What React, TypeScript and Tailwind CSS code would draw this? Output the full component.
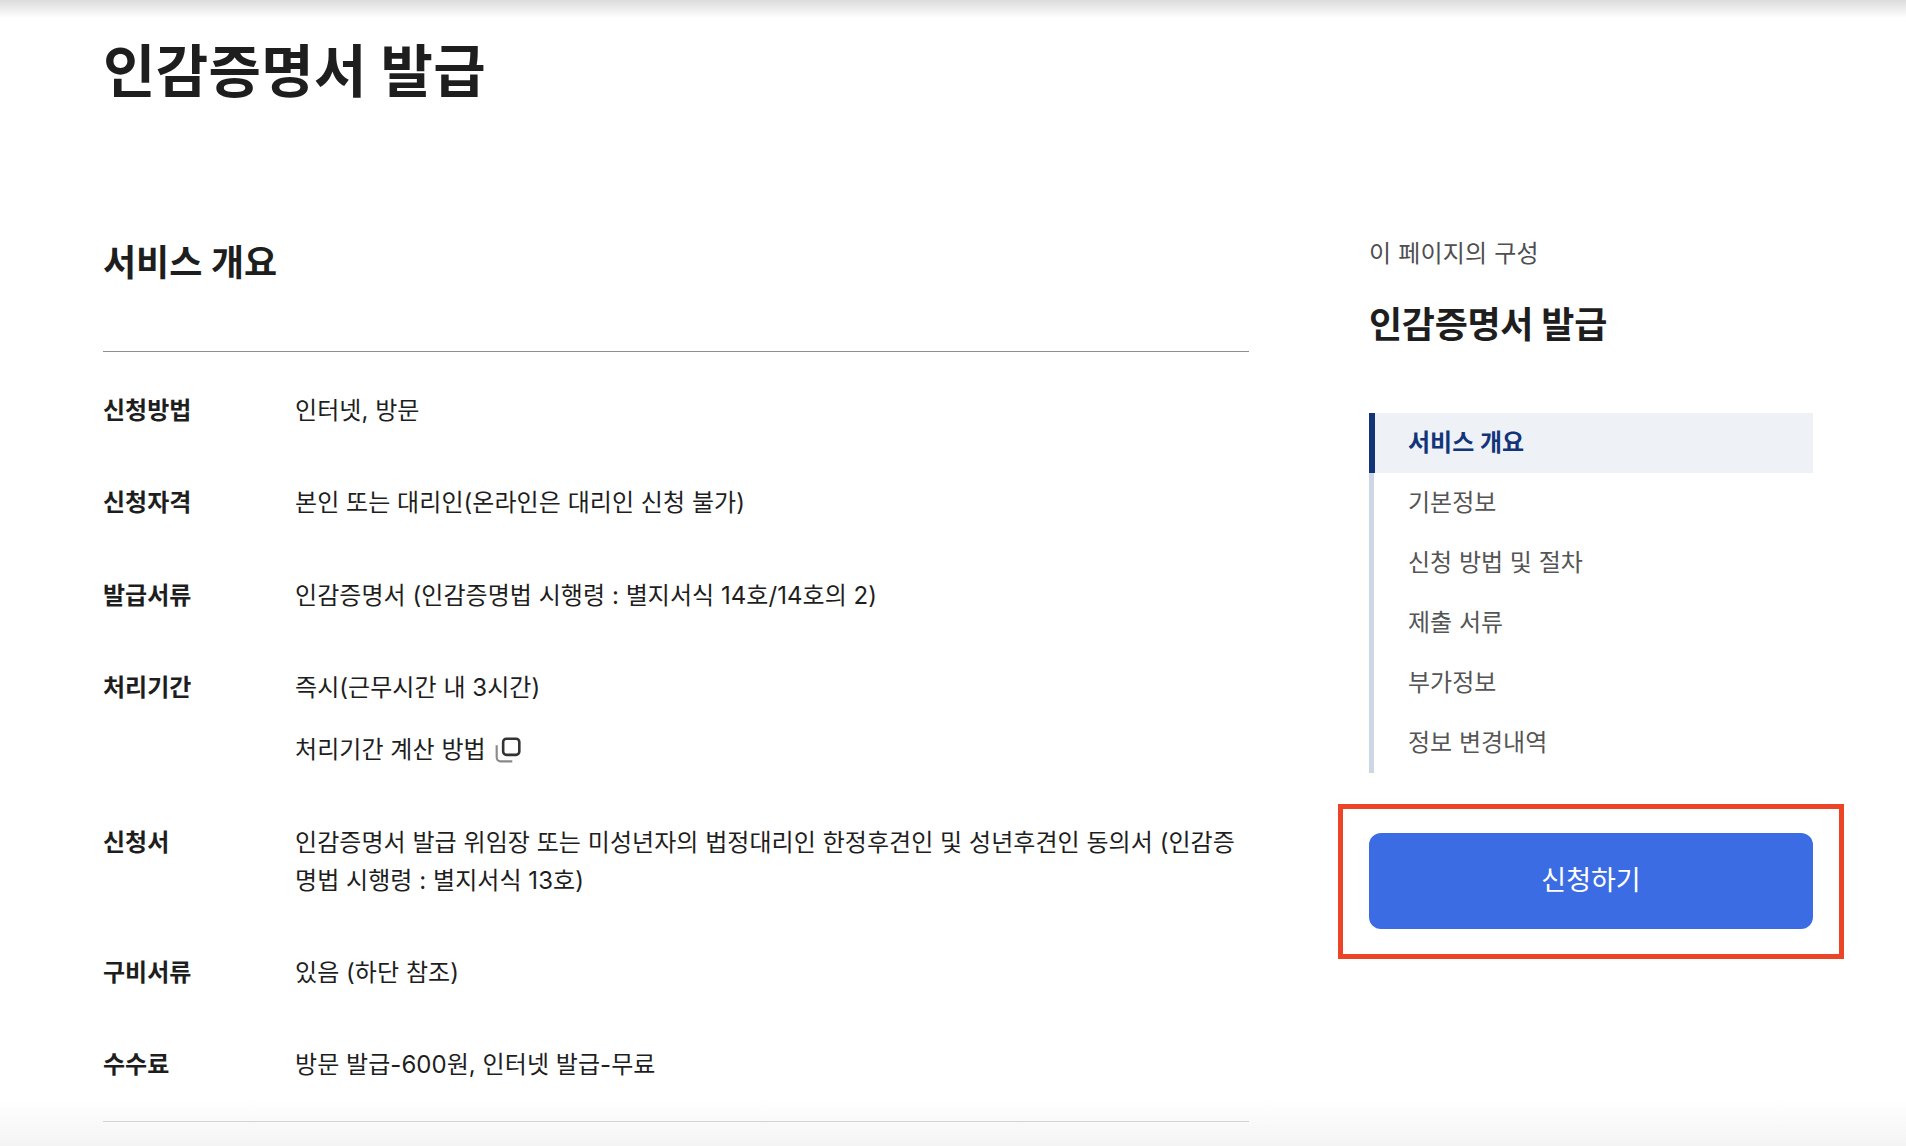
const FONT = "font-['Inter','Noto_Sans_CJK_KR','Noto_Sans',sans-serif]";

function CopyIcon() {
  return (
    <svg width="28" height="28" viewBox="0 0 26 26" fill="none" stroke="#4a4a4a" strokeWidth="2" className="ml-2 shrink-0">
      <rect x="8.5" y="2.5" width="15" height="15" rx="3" strokeWidth="2.4" stroke="#333" />
      <path d="M2.5 8.5V20a3.5 3.5 0 0 0 3.5 3.5h11" stroke="#8a8a8a" />
    </svg>
  );
}

const rows: { label: string; value: React.ReactNode }[] = [
  { label: "신청방법", value: "인터넷, 방문" },
  { label: "신청자격", value: "본인 또는 대리인(온라인은 대리인 신청 불가)" },
  { label: "발급서류", value: "인감증명서 (인감증명법 시행령 : 별지서식 14호/14호의 2)" },
  {
    label: "처리기간",
    value: (
      <div className="flex flex-col gap-[24px]">
        <div>즉시(근무시간 내 3시간)</div>
        <div className="flex h-[38px] items-center">
          처리기간 계산 방법
          <CopyIcon />
        </div>
      </div>
    ),
  },
  {
    label: "신청서",
    value: "인감증명서 발급 위임장 또는 미성년자의 법정대리인 한정후견인 및 성년후견인 동의서 (인감증명법 시행령 : 별지서식 13호)",
  },
  { label: "구비서류", value: "있음 (하단 참조)" },
  { label: "수수료", value: "방문 발급-600원, 인터넷 발급-무료" },
];

const nav = ["기본정보", "신청 방법 및 절차", "제출 서류", "부가정보", "정보 변경내역"];

export default function App() {
  return (
    <div className={`relative h-[1146px] w-[1906px] overflow-hidden bg-white text-[#1e1e1e] ${FONT}`}>
      <div className="pointer-events-none absolute inset-x-0 top-0 h-[18px] bg-gradient-to-b from-[#dcdcdc] to-white" />
      <div className="pointer-events-none absolute inset-x-0 bottom-0 h-[46px] bg-gradient-to-b from-white to-[#f4f4f4]" />

      <div className="relative pl-[103px] pr-[93px]">
        <h1 className="h-[135px] pt-[34px] text-[57px] font-bold leading-[76px] tracking-[0.3px]">인감증명서 발급</h1>

        <div className="mt-[96px] flex">
          <main className="w-[1146px] shrink-0">
            <h2 className="h-[121px] border-b border-[#8f8f8f] pt-[6px] text-[36px] font-bold leading-[52px]">서비스 개요</h2>
            <dl className="flex flex-col gap-[54.4px] border-b border-[#d2d2d2] pb-[37px] pt-[40px] text-[24px] leading-[38px]">
              {rows.map((r) => (
                <div key={r.label} className="flex">
                  <dt className="w-[192px] shrink-0 font-bold">{r.label}</dt>
                  <dd className="tracking-[0.05px]">{r.value}</dd>
                </div>
              ))}
            </dl>
          </main>

          <aside className="ml-[120px] w-[444px] shrink-0">
            <p className="pt-[5px] text-[24px] leading-[36px] tracking-[0.2px] text-[#4f4f4f]">이 페이지의 구성</p>
            <h3 className="mt-[28px] text-[36px] font-bold leading-[50px] tracking-[-0.3px]">인감증명서 발급</h3>
            <nav className="mt-[63px] flex flex-col border-l-[5px] border-[#cdd6e4] text-[24px] text-[#555]">
              <a className="-ml-[5px] flex h-[60px] items-center border-l-[6px] border-[#123579] bg-[#eef1f6] pl-[33px] font-bold text-[#123579]">서비스 개요</a>
              {nav.map((n) => (
                <a key={n} className="flex h-[60px] items-center pl-[34px]">{n}</a>
              ))}
            </nav>
            <button className="relative mt-[60px] flex h-[96px] w-full items-center justify-center rounded-[12px] bg-[#3b6ce4] text-[27px] font-normal text-white">
              신청하기
              <span className="pointer-events-none absolute -inset-x-[31px] -top-[29px] -bottom-[30px] border-[5px] border-[#ec4427]" />
            </button>
          </aside>
        </div>
      </div>
    </div>
  );
}
